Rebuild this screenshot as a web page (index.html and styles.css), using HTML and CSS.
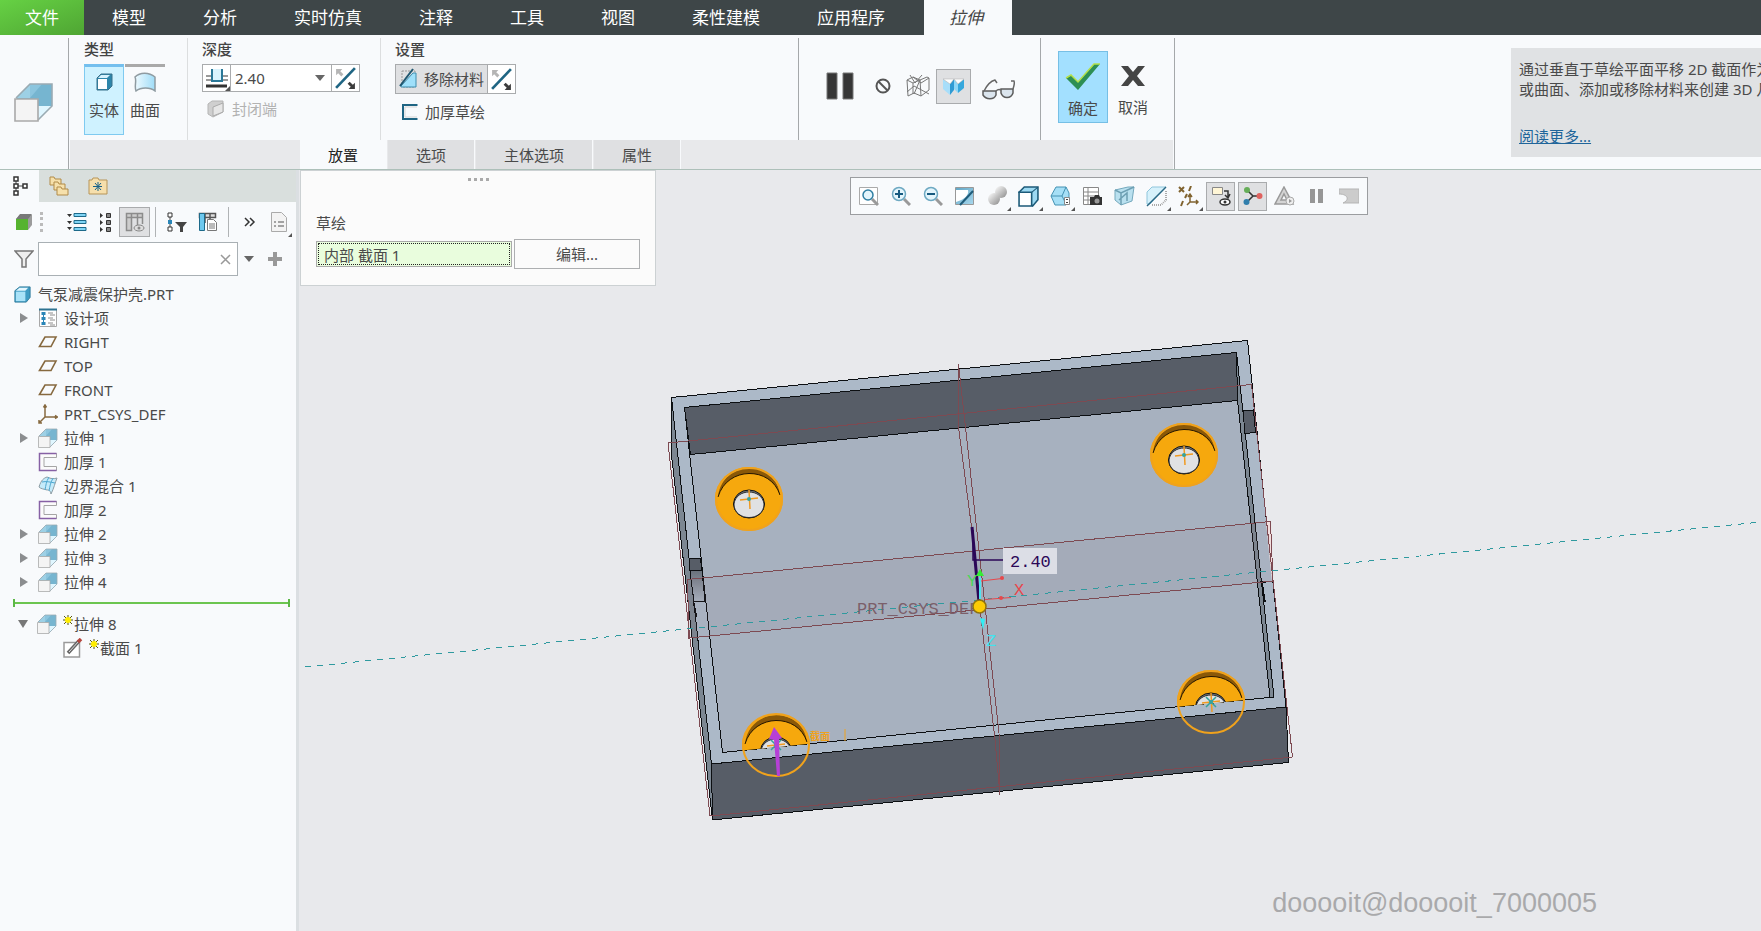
FILE: index.html
```html
<!DOCTYPE html>
<html lang="zh-CN">
<head>
    <meta charset="UTF-8">
    <meta name="viewport" content="width=device-width, initial-scale=1.0">
    <title>气泵减震保护壳.PRT</title>
    <link rel="stylesheet" href="styles.css">
</head>
<body>

    <!-- Shared icons -->
    <svg class="sprite" width="0" height="0">
        <defs>
            <linearGradient id="gBlue" x1="0" y1="0" x2="1" y2="1">
                <stop offset="0" stop-color="#5fa5c4"/>
                <stop offset="1" stop-color="#a8d8ee"/>
            </linearGradient>
            <linearGradient id="gSilver" x1="0" y1="0" x2="1" y2="1">
                <stop offset="0" stop-color="#ffffff"/>
                <stop offset="1" stop-color="#8a8a8a"/>
            </linearGradient>
            <linearGradient id="gSheet" x1="0" y1="0" x2="1" y2="0">
                <stop offset="0" stop-color="#eefaff"/>
                <stop offset="1" stop-color="#9fdcf7"/>
            </linearGradient>
        </defs>
        <symbol id="extrude" viewBox="0 0 20 20">
            <path d="M1 8 8 1h11v11l-7 7z" fill="#76b5d0"/>
            <path d="M1 8 8 1v7z" fill="#9dd0e5"/>
            <path d="M8 8V1h6L8 8z" fill="#8cc5de"/>
            <path d="M12 12h7l-7 7z" fill="#dff6ff"/>
            <path d="M1 8 8 1h11v11l-7 7" fill="none" stroke="#9aabb3" stroke-width=".8"/>
            <path d="M.5 8.500h11.500v11H.5z" fill="#f4f4f4" stroke="#a9a9a9" stroke-width=".8"/>
        </symbol>
        <symbol id="part" viewBox="0 0 20 20">
            <path d="M2 6 7 2h11v11l-4 5H2z" fill="#3f9cc4" stroke="#2f7b9c"/>
            <path d="M3 7h10v10H3z" fill="#a9e2f8"/>
            <path d="M3 6 7 3h9l-3 3z" fill="#e3f7ff"/>
        </symbol>
        <symbol id="plane" viewBox="0 0 20 20">
            <path d="M7 5h11l-5 9.500H1.500z" fill="none" stroke="#86693f" stroke-width="1.600"/>
        </symbol>
        <symbol id="csys" viewBox="0 0 20 20">
            <path d="M7 2v11h12M7 13l-6 6M5.500 3.500 7 1l1.500 2.500M17 11.500l2.500 1.500-2.500 1.500M1 16v3h3" fill="none" stroke="#86693f" stroke-width="1.500"/>
        </symbol>
        <symbol id="thicken" viewBox="0 0 20 20">
            <path d="M18.500 1.500h-17v17h17v-4H6v-9h12.500z" fill="#fbfbfb" stroke="#a5a5a5"/>
            <path d="M18.500 1.500h-17v17h17" fill="none" stroke="#8661a5" stroke-width="1.500"/>
        </symbol>
        <symbol id="blend" viewBox="0 0 20 20">
            <path d="M1 11C3 4 6 2 9 1c4 2 7 2 10 1-2 5-3 10-6 16-1-4-2-4-4-4-3-1-6-1-8-3z" fill="#c5ebfa" stroke="#8e9ca3"/>
            <path d="M4 6c4-1 8 0 13 1M11 1c-3 5-3 8-4 13M15 2c-3 6-3 8-4 13" fill="none" stroke="#4fa8d0"/>
        </symbol>
        <symbol id="design" viewBox="0 0 20 20">
            <path d="M1.500 1.500h17v17h-17z" fill="#fff" stroke="#a8a8a8"/>
            <path d="M1 1.500h18" stroke="#2d7290" stroke-width="2"/>
            <path d="M5.500 4v12" stroke="#2a86b8"/>
            <path d="M3.500 4h4v3h-4zM3.500 9h4v3h-4zM3.500 14h4v3h-4z" fill="#2a86b8"/>
            <path d="M10 5h5M12 7h5M10 10h5M12 12h5M10 15h5M12 17h5" stroke="#8c8c8c"/>
        </symbol>
        <symbol id="section" viewBox="0 0 20 20">
            <path d="M1 4.500h15.500V19H1z" fill="#fff" stroke="#9a9a9a" stroke-width="1.500"/>
            <path d="M5 15 16 3" stroke="#666" stroke-width="3.500"/>
            <path d="M6 14 16 3" stroke="#ddd"/>
            <path d="m15 4 3-3" stroke="#b5453d" stroke-width="3.500"/>
        </symbol>
        <symbol id="spark" viewBox="0 0 10 10">
            <path d="M5 0v10M0 5h10M1 1l8 8M9 1 1 9" stroke="#55550a"/>
            <circle cx="5" cy="5" r="3" fill="#ffee00"/>
        </symbol>
        <symbol id="flip" viewBox="0 0 22 22">
            <path d="M2 20 20 1" stroke="#1f6583" stroke-width="2.500"/>
            <path d="M2 2h6L6 4l3 3-2 2-3-3-2 2z" fill="#b5b5b5"/>
            <path d="M20 21h-6l2-2-3-3 2-2 3 3 2-2z" fill="#3c3c3c"/>
        </symbol>
        <symbol id="corner" viewBox="0 0 5 5"><path d="M5 0v5H0z" fill="#555"/></symbol>
    </svg>

    <!-- Menu bar -->
    <nav class="menubar">
        <button class="menu-file">文件</button>
        <button>模型</button>
        <button>分析</button>
        <button>实时仿真</button>
        <button>注释</button>
        <button>工具</button>
        <button>视图</button>
        <button>柔性建模</button>
        <button>应用程序</button>
        <button class="menu-active">拉伸</button>
    </nav>

    <!-- Ribbon -->
    <header class="ribbon">
        <div class="feature-icon">
            <svg width="40" height="40"><use href="#extrude"/></svg>
        </div>
        <div class="dashboard">
            <div class="groups">
                <section class="group group-type">
                    <h2>类型</h2>
                    <div class="type-buttons">
                        <button class="type-btn selected">
                            <svg width="20" height="20" viewBox="0 0 20 20"><path d="M3 6 7 2h11v12l-4 4H3z" fill="#2e86aa" stroke="#39708a"/><path d="M4 7h9v10H4z" fill="#fff"/><path d="m4 6 3-3h9l-3 3z" fill="#d8f2fd"/></svg>
                            实体
                        </button>
                        <button class="type-btn">
                            <svg width="22" height="20" viewBox="0 0 22 20"><path d="M1 5C6 0 15 0 21 5v14c-5-4-14-4-19 0C0 14 3 9 1 5z" fill="url(#gSheet)" stroke="#8f9ba1" stroke-width="1.500"/></svg>
                            曲面
                        </button>
                    </div>
                </section>
                <section class="group group-depth">
                    <h2>深度</h2>
                    <div class="combo">
                        <button class="combo-icon" aria-label="深度选项">
                            <svg width="24" height="22" viewBox="0 0 24 22"><path d="M1 9h5M1 13h5M18 9h5M18 13h5" stroke="#9a9a9a" stroke-width="2"/><path d="M1 19h21" stroke="#333" stroke-width="3"/><path d="M7 2v12h10V2" fill="#d9f3fd" stroke="#2a7898" stroke-width="2"/></svg>
                            <svg class="corner" width="5" height="5"><use href="#corner"/></svg>
                        </button>
                        <input type="text" value="2.40" aria-label="深度值">
                        <button class="combo-arrow" aria-label="展开"></button>
                        <button class="combo-flip" aria-label="反向"><svg width="23" height="23"><use href="#flip"/></svg></button>
                    </div>
                    <button class="plain-btn" disabled>
                        <svg width="18" height="18" viewBox="0 0 18 18"><path d="M1 4 5 1h11v11L6 17l-5-3z" fill="#cfcfcf" stroke="#b5b5b5"/><path d="m6 7 10-4v9L6 16z" fill="#e6e6e6" stroke="#aaa"/></svg>
                        封闭端
                    </button>
                </section>
                <section class="group group-settings">
                    <h2>设置</h2>
                    <div class="remove-material">
                        <button class="remove-btn">
                            <svg width="20" height="22" viewBox="0 0 20 22"><path d="M3 3h13v16H3z" fill="none" stroke="#999" stroke-dasharray="2 1"/><path d="M2 18 14 5h3v14H2z" fill="#9fe0fa" stroke="#3f8dad"/><path d="M1 18 14 1" stroke="#1e566f" stroke-width="2"/></svg>
                            移除材料
                        </button>
                        <button class="flip-btn" aria-label="反向"><svg width="23" height="23"><use href="#flip"/></svg></button>
                    </div>
                    <button class="plain-btn thick-btn">
                        <svg width="16" height="16" viewBox="0 0 16 16"><path d="M15 3H3v10h12" fill="none" stroke="#d5d5d5"/><path d="M15.500 1H1v14h14.500" fill="none" stroke="#1f6583" stroke-width="2"/></svg>
                        加厚草绘
                    </button>
                </section>
                <section class="group group-preview">
                    <button class="pause" aria-label="暂停"><svg width="28" height="28" viewBox="0 0 28 28"><path d="M1 1h10v26H1zM17 1h10v26H17z" fill="#363636" stroke="#777"/></svg></button>
                    <button aria-label="无预览"><svg width="16" height="16" viewBox="0 0 16 16"><path d="m3.500 3.500 9 9" stroke="#555" stroke-width="2"/><circle cx="8" cy="8" r="6.500" fill="none" stroke="#555" stroke-width="2"/></svg></button>
                    <button aria-label="分离"><svg width="26" height="24" viewBox="0 0 26 24"><path d="m2 6 6-3 7 3 7-3 2 1v12l-8 6-7-3-6 3-1-16zM2 6l6 3v11M8 9l7-3 1 16M15 6l-6 14M24 4l-8 5-8-6M2 18l7-6 15 8M5 1l5 8 7-8" fill="none" stroke="#777"/></svg></button>
                    <button class="pressed" aria-label="连接"><svg width="24" height="20" viewBox="0 0 24 20"><path d="M1 3v10l7 6V8z" fill="#a7defa"/><path d="m8 8 4-5v11l-4 5z" fill="#2f9bd4"/><path d="m12 3 4 5v9l-4-4z" fill="#8ed7f7"/><path d="m16 8 6-5v9l-6 5z" fill="#36a8dd"/><path d="M1 3h11L8 8zM12 3h10l-6 5z" fill="#fff" stroke="#aaa" stroke-width=".5"/></svg></button>
                    <button class="glasses" aria-label="预览"><svg width="34" height="22" viewBox="0 0 34 22"><path d="M1 13h13v4c-2 5-10 5-13 0zM19 11h12v4c-2 6-10 6-12 0z" fill="#dbe5ee" stroke="#5c5c5c" stroke-width="1.500"/><path d="M14 13c2-2 3-2 5-1M2 13C5 7 9 3 13 2l2 3M31 11c1-3 2-6 1-8h-3" fill="none" stroke="#666" stroke-width="1.500"/></svg></button>
                </section>
                <section class="group group-confirm">
                    <button class="confirm ok">
                        <svg width="36" height="28" viewBox="0 0 36 28"><path d="m1 15 5-3 7 7L29 1h6L13 27z" fill="#2d8f55"/><path d="m1 15 5-3 7 7L29 1h6" fill="none" stroke="#b4e04b" stroke-width="1.500"/></svg>
                        确定
                    </button>
                    <button class="confirm">
                        <svg width="26" height="28" viewBox="0 0 26 28"><path d="M1 4h7l5 6 5-6h7l-8 10 8 10h-7l-5-6-5 6H1l8-10z" fill="#454545"/></svg>
                        取消
                    </button>
                </section>
            </div>
            <div class="dash-tabs">
                <button class="active">放置</button>
                <button>选项</button>
                <button>主体选项</button>
                <button>属性</button>
            </div>
        </div>
        <aside class="help">
            <p>通过垂直于草绘平面平移 2D 截面作为实体<br>或曲面、添加或移除材料来创建 3D 几何。</p>
            <a href="#">阅读更多...</a>
        </aside>
    </header>

    <main class="workspace">
        <!-- Model tree -->
        <aside class="navigator">
            <div class="nav-tabs">
                <button class="active" aria-label="模型树"><svg width="16" height="20" viewBox="0 0 16 20"><path d="M3 3v14M3 10h9" stroke="#444"/><path d="M1 1h4v4H1zM1 8h4v4H1zM1 15h4v4H1zM10 8h4v4h-4z" fill="#fff" stroke="#333" stroke-width="1.500"/></svg></button>
                <button aria-label="文件夹浏览器"><svg width="20" height="20" viewBox="0 0 20 20"><g fill="#f6e0ab" stroke="#b18b48"><path d="M1 1h4l1 2h6v6H1z"/><path d="M5 6h4l1 2h6v6H5z"/><path d="M8 11h4l1 2h6v6H8z"/></g></svg></button>
                <button aria-label="收藏夹"><svg width="20" height="18" viewBox="0 0 20 18"><path d="M1 3h3l1-2h5l1 2h8v14H1z" fill="#f6dfac" stroke="#b79559"/><path d="M10 5v9M5 9.500h9M7 6l6 7M13 6l-6 7" stroke="#17628a"/></svg></button>
            </div>
            <div class="nav-tools">
                <button aria-label="模型"><svg width="18" height="18" viewBox="0 0 18 18"><path d="m1 6 4-4h12v10l-4 5z" fill="#9b9b9b"/><path d="M1 6 5 1h12l-4 5z" fill="#787878"/><path d="M1 6h12v11H1z" fill="#56b32f"/></svg></button>
                <span class="grip"></span>
                <button aria-label="全部展开"><svg width="20" height="20" viewBox="0 0 20 20"><path d="M0 2h5L2.500 5zM0 9h5l-2.500 3zM0 15h5l-2.500 3z" fill="#333"/><path d="M7 1.500h12v3H7zM7 8.500h12v3H7zM7 15.500h12v3H7z" fill="#7fd4f5" stroke="#1d6a8a"/></svg></button>
                <button class="narrow" aria-label="全部折叠"><svg width="12" height="20" viewBox="0 0 12 20"><path d="M0 1v5l3-2.500zM0 8v5l3-2.500zM0 15v5l3-2.500z" fill="#333"/><path d="M6.500 1.500h4v4h-4zM6.500 8.500h4v4h-4zM6.500 15.500h4v4h-4z" fill="#888" stroke="#333"/></svg></button>
                <button class="pressed" aria-label="树列"><svg width="20" height="20" viewBox="0 0 20 20"><path d="M1.500 1.500h16v4h-16zM1.500 5.500h5v13h-5zM6.500 1v12M12.500 1v12M17.500 5v7" fill="#cdcdcd" stroke="#8c8c8c" stroke-width="1.500"/><ellipse cx="14" cy="16" rx="5" ry="3" fill="#ddd" stroke="#888"/><circle cx="14" cy="16" r="1.500" fill="#888"/></svg></button>
                <span class="sep"></span>
                <button aria-label="树过滤器"><svg width="20" height="20" viewBox="0 0 20 20"><path d="M3 3v14" stroke="#444"/><path d="M1 1h4v4H1zM1 15h4v4H1z" fill="#fff" stroke="#333"/><path d="M1 8h4v4H1z" fill="#2a86b8"/><path d="M8 10h12l-4 5v5h-3v-5z" fill="#444"/></svg></button>
                <button aria-label="设置"><svg width="20" height="20" viewBox="0 0 20 20"><path d="M1.500 1.500h16v4h-16zM7 1v10M12 1v6" fill="#ddd" stroke="#555" stroke-width="1.500"/><path d="M1.500 1.500h5v17h-5z" fill="#6dc8ee" stroke="#1d6a8a"/><path d="M9.500 7.500h6l3 3v8h-9z" fill="#fff" stroke="#777"/><path d="M11 12h6M11 14h6M11 16h6" stroke="#777"/></svg></button>
                <span class="sep"></span>
                <button aria-label="更多"><svg width="12" height="10" viewBox="0 0 12 10"><path d="m1 1 4 4-4 4M6 1l4 4-4 4" fill="none" stroke="#333" stroke-width="1.500"/></svg></button>
                <button class="narrow" aria-label="显示"><svg width="16" height="20" viewBox="0 0 16 20"><path d="M.5.500h10l5 5v14H.5z" fill="#f3f3f3" stroke="#aaa"/><path d="M3 10h2M3 14h2M7 10h6M7 14h6" stroke="#888" stroke-width="1.500"/></svg><svg class="corner" width="4" height="4"><use href="#corner"/></svg></button>
            </div>
            <div class="search">
                <svg width="20" height="18" viewBox="0 0 20 18"><path d="M1 1h18l-7 8v8H8V9z" fill="#eee" stroke="#777" stroke-width="1.500"/></svg>
                <div class="search-box">
                    <input type="text" aria-label="搜索模型树">
                    <button aria-label="清除"><svg width="11" height="11" viewBox="0 0 11 11"><path d="m1 1 9 9M10 1l-9 9" stroke="#999" stroke-width="1.500"/></svg></button>
                </div>
                <button class="search-drop" aria-label="搜索选项"></button>
                <button class="search-add" aria-label="添加"><svg width="14" height="14" viewBox="0 0 14 14"><path d="M7 0v14M0 7h14" stroke="#999" stroke-width="4"/></svg></button>
            </div>
            <ul class="tree">
                <li class="root"><svg width="19" height="19"><use href="#part"/></svg>气泵减震保护壳.PRT</li>
                <li><button class="exp" aria-label="展开"></button><svg width="20" height="20"><use href="#design"/></svg>设计项</li>
                <li><svg width="20" height="20"><use href="#plane"/></svg>RIGHT</li>
                <li><svg width="20" height="20"><use href="#plane"/></svg>TOP</li>
                <li><svg width="20" height="20"><use href="#plane"/></svg>FRONT</li>
                <li><svg width="20" height="20"><use href="#csys"/></svg>PRT_CSYS_DEF</li>
                <li><button class="exp" aria-label="展开"></button><svg width="20" height="20"><use href="#extrude"/></svg>拉伸 1</li>
                <li><svg width="20" height="20"><use href="#thicken"/></svg>加厚 1</li>
                <li><svg width="20" height="20"><use href="#blend"/></svg>边界混合 1</li>
                <li><svg width="20" height="20"><use href="#thicken"/></svg>加厚 2</li>
                <li><button class="exp" aria-label="展开"></button><svg width="20" height="20"><use href="#extrude"/></svg>拉伸 2</li>
                <li><button class="exp" aria-label="展开"></button><svg width="20" height="20"><use href="#extrude"/></svg>拉伸 3</li>
                <li><button class="exp" aria-label="展开"></button><svg width="20" height="20"><use href="#extrude"/></svg>拉伸 4</li>
                <li class="insert-line"><span></span></li>
                <li><button class="exp open" aria-label="折叠"></button><svg width="20" height="20"><use href="#extrude"/></svg><svg class="spark" width="10" height="10"><use href="#spark"/></svg>拉伸 8</li>
                <li class="child"><svg width="20" height="20"><use href="#section"/></svg><svg class="spark" width="10" height="10"><use href="#spark"/></svg>截面 1</li>
            </ul>
        </aside>

        <!-- Graphics area -->
        <div class="viewport">
            <svg class="scene" viewBox="299 170 1462 761">
                <defs>
                    <clipPath id="floorClip">
                        <path d="M600 300h700v394.500L722.500 752.500 600 765z"/>
                    </clipPath>
                    <linearGradient id="notch" x1="0" y1="0" x2="0" y2="1">
                        <stop offset="0" stop-color="#69717b"/>
                        <stop offset="1" stop-color="#aab5c3"/>
                    </linearGradient>
                    <g id="bossFill">
                        <ellipse rx="34" ry="32" fill="#f6a80d"/>
                        <path d="M-31-2C-27-40 27-40 31-4 22-33-22-33-31-2z" fill="#8a5808"/>
                        <path d="M-31-2C-22-33 22-33 31-4" fill="none" stroke="#221400"/>
                        <ellipse cy="5" rx="15.500" ry="14" fill="#777d84" stroke="#111"/>
                        <path d="M-15 5C-13-11 13-11 15 5 15 23-15 23-15 5z" fill="#e0e1e3" stroke="#111" stroke-width=".8"/>
                    </g>
                    <g id="bossMark">
                        <path d="M0-9 1 10M-9 1 9-1" stroke="#f09a20" stroke-width="1.500" fill="none"/>
                        <circle r="2" fill="#35a39c"/>
                    </g>
                </defs>

                <!-- housing -->
                <g class="edges" stroke="#0c0f12" stroke-linejoin="round">
                    <path d="M671.500 397.500V455l41 365-1-56z" fill="#7c8792"/>
                    <path d="M671.500 397.500 1247.500 340.500 1286 707 711.500 764z" fill="#acb9c8"/>
                    <path d="M684.500 407.500 1236.500 352.500 1274 697 722.500 752.500z" fill="#a7b1bf"/>
                    <path d="M684.500 407.500 1236.500 352.500l1 48L690.500 454.500z" fill="#575d67"/>
                    <path d="M1236.500 352.500 1274 697h-4L1237.500 400.500z" fill="#7c8792"/>
                    <path d="M711.500 764 1286 707l2.500 55.500L712.500 820z" fill="#575d67"/>
                    <path d="m1243.500 411 10-1 2 22.500-11 1z" fill="#575d67"/>
                    <path d="m689.500 559 11-.5 1.500 12h-12z" fill="#575d67"/>
                    <path d="m690 571 12-.5 3 31-11 .5z" fill="url(#notch)"/>
                    <path d="M693.500 602l3 15M1260 582l13.500-.5M1262 582l3 20" fill="none" stroke-width="1.500"/>
                </g>

                <!-- datum planes -->
                <path d="M687.500 579.500 1270.500 521.500l2.500 59.500L689 638z" fill="#8c6a72" fill-opacity=".08"/>
                <path d="m1266 522 5-.5 2 59-1 1z" fill="#f2dede"/>
                <g class="edges" fill="none" stroke="#7d4a52">
                    <path d="M668 443 1251.500 384.500 1292.500 757 710 816z"/>
                    <path d="M687.500 579.500 1270.500 521.500l2.500 59.500L689 638z"/>
                    <path d="M958.500 364v63l13 100 10 95 13.500 118 5 55-1-62-10-90-10-93z"/>
                </g>

                <!-- bosses -->
                <use href="#bossFill" x="749" y="499"/>
                <use href="#bossFill" x="1184" y="455"/>
                <g clip-path="url(#floorClip)">
                    <use href="#bossFill" x="776" y="746"/>
                    <use href="#bossFill" x="1211" y="702"/>
                </g>
                <g fill="none" stroke="#f0a21c" stroke-width="2">
                    <ellipse cx="749" cy="499" rx="33" ry="31"/>
                    <ellipse cx="1184" cy="455" rx="33" ry="31"/>
                    <ellipse cx="776" cy="745" rx="33" ry="31"/>
                    <ellipse cx="1211" cy="702" rx="33" ry="31"/>
                </g>
                <use href="#bossMark" x="749" y="499"/>
                <use href="#bossMark" x="1184" y="455"/>
                <use href="#bossMark" x="776" y="745"/>
                <use href="#bossMark" x="1211" y="702"/>
                <path d="m771 740 10 10M781 740l-10 10M1206 697l10 10M1216 697l-10 10" stroke="#35a39c" stroke-width="1.500"/>

                <path class="edges" d="M305 667 1761 522" stroke="#2f9a9f" stroke-dasharray="6 6"/>

                <!-- drag direction -->
                <path d="m774 727-5 12 5 1 3 36h3l-1-37 3-1z" fill="#b640d6"/>
                <text class="note-orange" x="810" y="740">截面</text>
                <path d="M845 729v12" stroke="#f0a21c"/>

                <!-- csys and depth dimension -->
                <text class="vec csys-name" x="857" y="614">PRT_CSYS_DEF</text>
                <path d="m972 527 7 75" stroke="#2b0757" stroke-width="3"/>
                <path d="M973 530v30h30" fill="none" stroke="#2b0757" stroke-width="1.500"/>
                <rect x="1003" y="548" width="54" height="26" fill="#dcdee6"/>
                <text class="vec dim" x="1010" y="567">2.40</text>
                <path d="m981 581 21-2.500M985 599.500l26-2" stroke="#e8474b"/>
                <circle cx="1002" cy="578" r="2" fill="#e8474b"/>
                <circle cx="1001" cy="598" r="2" fill="#e8474b"/>
                <path d="m976 576 4-7 4 7z" fill="#33ee33"/>
                <path d="M980 577v22" stroke="#4fe3ee" stroke-width="2"/>
                <path d="m980 618 5 1-2 11z" fill="#33eef5"/>
                <text class="vec axis-y" x="967" y="586">Y</text>
                <text class="vec axis-x" x="1014" y="595">X</text>
                <text class="vec axis-z" x="986" y="646">Z</text>
                <circle cx="979.500" cy="606.500" r="6.500" fill="#fccb05" stroke="#8f7410" stroke-width="1.500"/>
            </svg>

            <div class="view-toolbar">
                <button aria-label="重新调整"><svg width="20" height="20" viewBox="0 0 20 20"><path d="M.500 1.500h18v17H.5z" fill="#fff" stroke="#aaa"/><path d="m13 13 6 6" stroke="#999" stroke-width="3"/><circle cx="9" cy="9" r="5" fill="#e3f5fc" stroke="#2f7fa3" stroke-width="1.500"/></svg></button>
                <button aria-label="放大"><svg width="20" height="20" viewBox="0 0 20 20"><path d="m13 13 6 6" stroke="#999" stroke-width="3"/><circle cx="8" cy="8" r="6.500" fill="#e3f5fc" stroke="#6ea9c2" stroke-width="1.500"/><path d="M8 4v8M4 8h8" stroke="#165a80" stroke-width="2"/></svg></button>
                <button aria-label="缩小"><svg width="20" height="20" viewBox="0 0 20 20"><path d="m13 13 6 6" stroke="#999" stroke-width="3"/><circle cx="8" cy="8" r="6.500" fill="#e3f5fc" stroke="#6ea9c2" stroke-width="1.500"/><path d="M4 8h8" stroke="#165a80" stroke-width="2"/></svg></button>
                <button aria-label="重画"><svg width="20" height="20" viewBox="0 0 20 20"><path d="M.5 1.500h18v17H.5z" fill="url(#gBlue)" stroke="#999"/><path d="M1 4h12c1 4-2 9-12 12z" fill="#fff"/><path d="M5 19 18 5" stroke="#1f5c7a" stroke-width="2"/></svg></button>
                <button aria-label="渲染选项"><svg width="20" height="20" viewBox="0 0 20 20"><circle cx="14" cy="6" r="6" fill="url(#gSilver)"/><circle cx="7" cy="13" r="6" fill="url(#gSilver)"/></svg><svg class="corner" width="4" height="4"><use href="#corner"/></svg></button>
                <button aria-label="显示样式"><svg width="21" height="21" viewBox="0 0 20 20"><path d="m1 6 5-5h13v12l-5 6z" fill="#9cd9f2" stroke="#1c5a78" stroke-width="1.500"/><path d="M1 6h12v13H1z" fill="#fff" stroke="#1c5a78" stroke-width="1.500"/><path d="m13 6 6-5" stroke="#1c5a78"/></svg><svg class="corner" width="4" height="4"><use href="#corner"/></svg></button>
                <button aria-label="已保存方向"><svg width="21" height="20" viewBox="0 0 21 20"><path d="m1 10 5-9h10l3 6v6l-3 6H5z" fill="#a5dff6" stroke="#4492b3"/><path d="M1 10h11l4-9M12 10l4 8" fill="none" stroke="#4492b3"/><path d="M14.500 11.500h5v7h-5z" fill="#fff" stroke="#888"/><path d="M17 13v1M17 16v1" stroke="#444" stroke-width="2"/></svg><svg class="corner" width="4" height="4"><use href="#corner"/></svg></button>
                <button aria-label="视图管理器"><svg width="21" height="20" viewBox="0 0 21 20"><path d="M1.500 1.500h15v17h-15zM1 6h16M1 10h16M1 14h8M6 1v18" fill="#fff" stroke="#888"/><path d="M8 11h4l1-2h4l1 2h2v8H8z" fill="#333"/><circle cx="15" cy="15" r="2.500" fill="#999"/></svg></button>
                <button aria-label="透视图"><svg width="21" height="20" viewBox="0 0 21 20"><path d="M1 4 14 1h6l-2 14-11 4-6-5z" fill="#b9e0ef" stroke="#74a9bd"/><path d="m1 4 6 3 13-6M7 7v12M5 14l8-7v8" fill="none" stroke="#6d9fb3" stroke-width="1.500"/></svg></button>
                <button aria-label="截面"><svg width="21" height="21" viewBox="0 0 21 21"><path d="m1 6 5-5h14L4 18H1z" fill="#d6f1fb" stroke="#8fc6dc"/><path d="M6 19h9l5-5V4" fill="none" stroke="#aaa" stroke-width="2" stroke-dasharray="1 1"/><path d="M1 20 20 1" stroke="#2a6884" stroke-width="1.500"/></svg><svg class="corner" width="4" height="4"><use href="#corner"/></svg></button>
                <button aria-label="基准显示过滤器"><svg width="21" height="21" viewBox="0 0 21 21"><path d="m1 1 5 5M6 1 1 6M13 0l-2 5M9 8l-2 4M5 15l-2 5" fill="none" stroke="#80632f" stroke-width="2"/><path d="M12 9v7h8M12 16l-3 3M10 11l2-3 2 3M18 14l2 2-2 2" fill="none" stroke="#80632f" stroke-width="1.500"/></svg><svg class="corner" width="4" height="4"><use href="#corner"/></svg></button>
                <button class="pressed" aria-label="注释显示"><svg width="20" height="20" viewBox="0 0 20 20"><path d="M1.500 1.500h10v7h-10z" fill="#fff6d6" stroke="#888"/><path d="M13 5h4v6M14 9l3 3 2-4" fill="none" stroke="#333" stroke-width="1.500"/><ellipse cx="14" cy="16" rx="5" ry="3" fill="#fff" stroke="#333" stroke-width="1.500"/><circle cx="14" cy="16" r="1.500" fill="#333"/></svg></button>
                <button class="pressed" aria-label="旋转中心"><svg width="20" height="20" viewBox="0 0 20 20"><path d="m4 4 6 6-6 6M10 10h7" fill="none" stroke="#333" stroke-width="1.500"/><circle cx="4" cy="4" r="3" fill="#66ad58"/><circle cx="3.500" cy="16" r="3" fill="#317fad"/><circle cx="16.500" cy="10" r="3" fill="#df625f"/></svg></button>
                <button aria-label="仿真"><svg width="21" height="20" viewBox="0 0 21 20"><path d="m10 1 9 17H1zM10 8l3 6H7z" fill="#d4d4d4" fill-rule="evenodd" stroke="#999" stroke-width="1.500"/><circle cx="16" cy="15" r="4" fill="#eee" stroke="#aaa"/><path d="m15 13 3 2-3 2z" fill="#999"/></svg></button>
                <button aria-label="暂停"><svg width="14" height="16" viewBox="0 0 14 16"><path d="M0 1h5v14H0zM8 1h5v14H8z" fill="#969696"/></svg></button>
                <button aria-label="结果"><svg width="20" height="16" viewBox="0 0 20 16"><path d="M0 1h20v14H4c7-3 5-9-4-9z" fill="#ccc" stroke="#b5b5b5"/></svg></button>
            </div>

            <!-- Placement slide-down panel -->
            <section class="placement">
                <div class="dots"><i></i><i></i><i></i><i></i></div>
                <label for="sketch">草绘</label>
                <div class="placement-row">
                    <input id="sketch" type="text" value="内部 截面 1" readonly>
                    <button>编辑...</button>
                </div>
            </section>

            <p class="watermark">dooooit@dooooit_7000005</p>
        </div>
    </main>

</body>
</html>
```

FILE: styles.css
```css
* {
    box-sizing: border-box;
}
body {
    margin: 0;
    height: 100vh;
    display: flex;
    flex-direction: column;
    overflow: hidden;
    background-color: #f8fafc;
    color: #4a4a4a;
    font-family: "Noto Sans", "Noto Sans CJK SC", sans-serif;
    font-size: 15px;
    line-height: 20px;
}
button, input {
    font: inherit;
    color: inherit;
    margin: 0;
    padding: 0;
    border: none;
    background: none;
}
svg {
    display: block;
    flex: none;
}
h2, p, ul {
    margin: 0;
    padding: 0;
}
.sprite {
    position: absolute;
}
.corner {
    position: absolute;
    right: 0;
    bottom: 0;
}
.pressed {
    background-color: #dfe0e2;
    border: 1px solid #a9abad;
}

/* Menu bar */
.menubar {
    display: flex;
    gap: 1px;
    height: 35px;
    flex: none;
    background-color: #3e4648;
}
.menubar button {
    padding: 0 28px;
    color: #fff;
    font-size: 17px;
    line-height: 24px;
    white-space: nowrap;
}
.menubar .menu-file {
    padding: 0 25px;
    margin-right: -1px;
    background: linear-gradient(160deg, #66d144, #4fa533);
}
.menubar .menu-active {
    margin-left: 10px;
    padding: 0 29px 0 25px;
    background-color: #f8fafc;
    color: #444;
    font-style: italic;
}

/* Ribbon */
.ribbon {
    display: flex;
    flex: none;
    height: 135px;
    border-bottom: 1px solid #adc0b9;
}
.feature-icon {
    width: 68px;
    padding: 47px 14px 0;
    flex: none;
}
.dashboard {
    width: 1107px;
    flex: none;
    display: flex;
    flex-direction: column;
    margin: 3px 0 0;
    padding: 0 1px;
    border-left: 1px solid #a5a8aa;
    border-right: 1px solid #a5a8aa;
}
.groups {
    display: flex;
    flex: 1;
}
.group h2 {
    font-size: 15px;
    font-weight: 500;
    line-height: 22px;
    color: #444;
}
.group-type {
    width: 117px;
    padding-left: 14px;
}
.group-depth {
    width: 193px;
    padding-left: 14px;
}
.group-settings {
    width: 418px;
    padding-left: 14px;
}
.group-depth, .group-settings {
    border-left: 1px solid #dcdedf;
}
.type-buttons {
    display: flex;
    gap: 1px;
    margin-top: 4px;
}
.type-btn {
    width: 40px;
    height: 71px;
    display: flex;
    flex-direction: column;
    align-items: center;
    gap: 8px;
    padding-top: 5px;
    border-top: 3px solid #a9a9a9;
    white-space: nowrap;
}
.type-btn.selected {
    background-color: #cff2ff;
    border: 1px solid #7fcaf0;
    border-top: 3px solid #74bfee;
}
.combo, .remove-material {
    display: flex;
    width: max-content;
    margin-top: 4px;
    border: 1px solid #a9abad;
    background-color: #fff;
}
.combo {
    height: 28px;
}
.combo-icon {
    position: relative;
    width: 28px;
    padding-left: 2px;
    border-right: 1px solid #a9abad;
}
.combo input {
    width: 78px;
    padding-left: 4px;
}
.combo-arrow {
    width: 22px;
}
.combo-arrow::before, .search-drop::before {
    content: "";
    display: block;
    margin: auto;
    width: 0;
    border: 5px solid transparent;
    border-top: 6px solid #666;
    border-bottom: none;
}
.combo-flip, .flip-btn {
    width: 28px;
    padding-left: 2px;
    border-left: 1px solid #a9abad;
}
.plain-btn {
    display: flex;
    align-items: center;
    gap: 7px;
    margin: 7px 0 0 5px;
}
.plain-btn:disabled {
    color: #b2b2b2;
}
.remove-material {
    height: 30px;
}
.remove-btn {
    display: flex;
    align-items: center;
    gap: 5px;
    padding: 0 3px;
    background-color: #dfe0e2;
    white-space: nowrap;
}
.thick-btn {
    margin: 8px 0 0 7px;
}
.group-preview {
    display: flex;
    align-items: center;
    width: 242px;
    padding: 0 0 6px 27px;
    border-left: 1px solid #a5a8aa;
}
.group-preview .pause {
    margin-right: 21px;
}
.group-preview button {
    margin-right: 14px;
}
.group-preview .pressed {
    width: 35px;
    height: 35px;
    margin: 0 11px 0 -9px;
    padding-left: 5px;
}
.group-preview .glasses {
    margin: 5px 0 0;
}
.group-confirm {
    display: flex;
    padding: 13px 0 0 17px;
    border-left: 1px solid #a5a8aa;
}
.confirm {
    width: 50px;
    height: 72px;
    display: flex;
    flex-direction: column;
    align-items: center;
    gap: 7px;
    padding-top: 11px;
}
.confirm.ok {
    background-color: #a3e0ff;
    border: 1px solid #76bfe5;
}
.dash-tabs {
    display: flex;
    gap: 2px;
    height: 29px;
    padding-left: 230px;
    background-color: #e8e9eb;
}
.dash-tabs button {
    padding: 0 28px;
    background-color: #dfe0e2;
    box-shadow: 1px 0 #f8fafc;
}
.dash-tabs .active {
    background-color: #f8fafc;
    color: #222;
}
.help {
    flex: 1;
    min-width: 0;
    overflow: hidden;
    margin: 13px 0 12px 336px;
    padding: 11px 8px;
    background-color: #e0e2e4;
    white-space: nowrap;
}
.help p {
    margin-bottom: 27px;
}
.help a {
    color: #20659a;
}

/* Model tree */
.workspace {
    display: flex;
    flex: 1;
    min-height: 0;
}
.navigator {
    width: 299px;
    flex: none;
    border-right: 3px solid #dbdfe2;
}
.nav-tabs {
    display: flex;
    height: 32px;
    background-color: #d9dfdd;
}
.nav-tabs button {
    width: 39px;
    display: flex;
    align-items: center;
    justify-content: center;
}
.nav-tabs .active {
    background-color: #f8fafc;
    padding-left: 2px;
}
.nav-tools {
    display: flex;
    align-items: center;
    height: 40px;
    padding-left: 8px;
}
.nav-tools button {
    position: relative;
    width: 31px;
    height: 30px;
    display: flex;
    align-items: center;
    justify-content: center;
}
.nav-tools .narrow {
    width: 27px;
}
.grip {
    width: 4px;
    height: 20px;
    margin: 0 17px 0 1px;
    border-left: 3px dotted #bbb;
}
.sep {
    width: 1px;
    height: 30px;
    margin: 0 5px;
    background-color: #b0b3b5;
}
.search {
    display: flex;
    align-items: center;
    height: 34px;
    padding-left: 14px;
}
.search-box {
    display: flex;
    width: 200px;
    height: 34px;
    margin-left: 4px;
    background-color: #fff;
    border: 1px solid #a9b0b4;
}
.search-box input {
    flex: 1;
    min-width: 0;
    padding-left: 6px;
}
.search-box button {
    width: 17px;
}
.search-drop {
    width: 22px;
}
.search-add {
    margin-left: 8px;
}
.tree {
    padding-top: 6px;
    list-style: none;
}
.tree li {
    display: flex;
    align-items: center;
    gap: 6px;
    height: 24px;
    padding-left: 38px;
    white-space: nowrap;
}
.tree .root {
    padding-left: 13px;
}
.tree .child {
    padding-left: 63px;
}
.exp {
    width: 0;
    margin: 0 4px 0 -18px;
    border: 5px solid transparent;
    border-left: 8px solid #8b8d8f;
    border-right: none;
}
.exp.open {
    margin: 0 3px 0 -20px;
    border: 5px solid transparent;
    border-top: 8px solid #777;
    border-bottom: none;
}
.spark {
    margin: 0 -5px 8px 0;
}
.tree .insert-line {
    height: 18px;
    padding: 0 6px 0 13px;
}
.insert-line span {
    flex: 1;
    height: 8px;
    border: solid #5cb846;
    border-width: 0 2px;
    background: linear-gradient(#6cc550, #6cc550) center / 100% 2px no-repeat;
}

/* Graphics area */
.viewport {
    position: relative;
    flex: 1;
    min-width: 0;
    background-color: #e8e9ec;
}
.scene {
    width: 100%;
    height: 100%;
}
.edges {
    shape-rendering: crispEdges;
}
.vec {
    font-family: "Liberation Mono", monospace;
    font-size: 17px;
}
.csys-name {
    fill: #7b5f6a;
}
.dim {
    fill: #2b0757;
}
.axis-x {
    fill: #e8474b;
}
.axis-y {
    fill: #48d65a;
}
.axis-z {
    fill: #43e2ee;
}
.note-orange {
    fill: #f0a21c;
    font-size: 10px;
    font-weight: bold;
}
.view-toolbar {
    position: absolute;
    top: 7px;
    left: 551px;
    display: flex;
    align-items: center;
    gap: 3px;
    height: 38px;
    padding: 0 4px 0 3px;
    background-color: #f8fafc;
    border: 1px solid #9b9da0;
}
.view-toolbar button {
    position: relative;
    width: 29px;
    height: 29px;
    display: flex;
    align-items: center;
    justify-content: center;
}
.placement {
    position: absolute;
    top: 0;
    left: 1px;
    width: 356px;
    height: 116px;
    padding: 7px 15px;
    background-color: #fbfbfb;
    border: 1px solid #ccd1d3;
}
.dots {
    display: flex;
    justify-content: center;
    gap: 3px;
    height: 35px;
}
.dots i {
    width: 3px;
    height: 3px;
    background-color: #aaa;
}
.placement-row {
    display: flex;
    align-items: center;
    gap: 2px;
    margin-top: 6px;
}
.placement input {
    width: 196px;
    height: 26px;
    padding-left: 7px;
    background-color: #e9fddd;
    border: 1px solid #aaa;
    outline: 1px dotted #222;
    outline-offset: -3px;
}
.placement button {
    width: 126px;
    height: 30px;
    border: 1px solid #adafb1;
}
.watermark {
    position: absolute;
    right: 164px;
    bottom: 12px;
    color: #a9a9ab;
    font-family: "Liberation Sans", Arial, sans-serif;
    font-size: 27px;
    line-height: 32px;
}
```
